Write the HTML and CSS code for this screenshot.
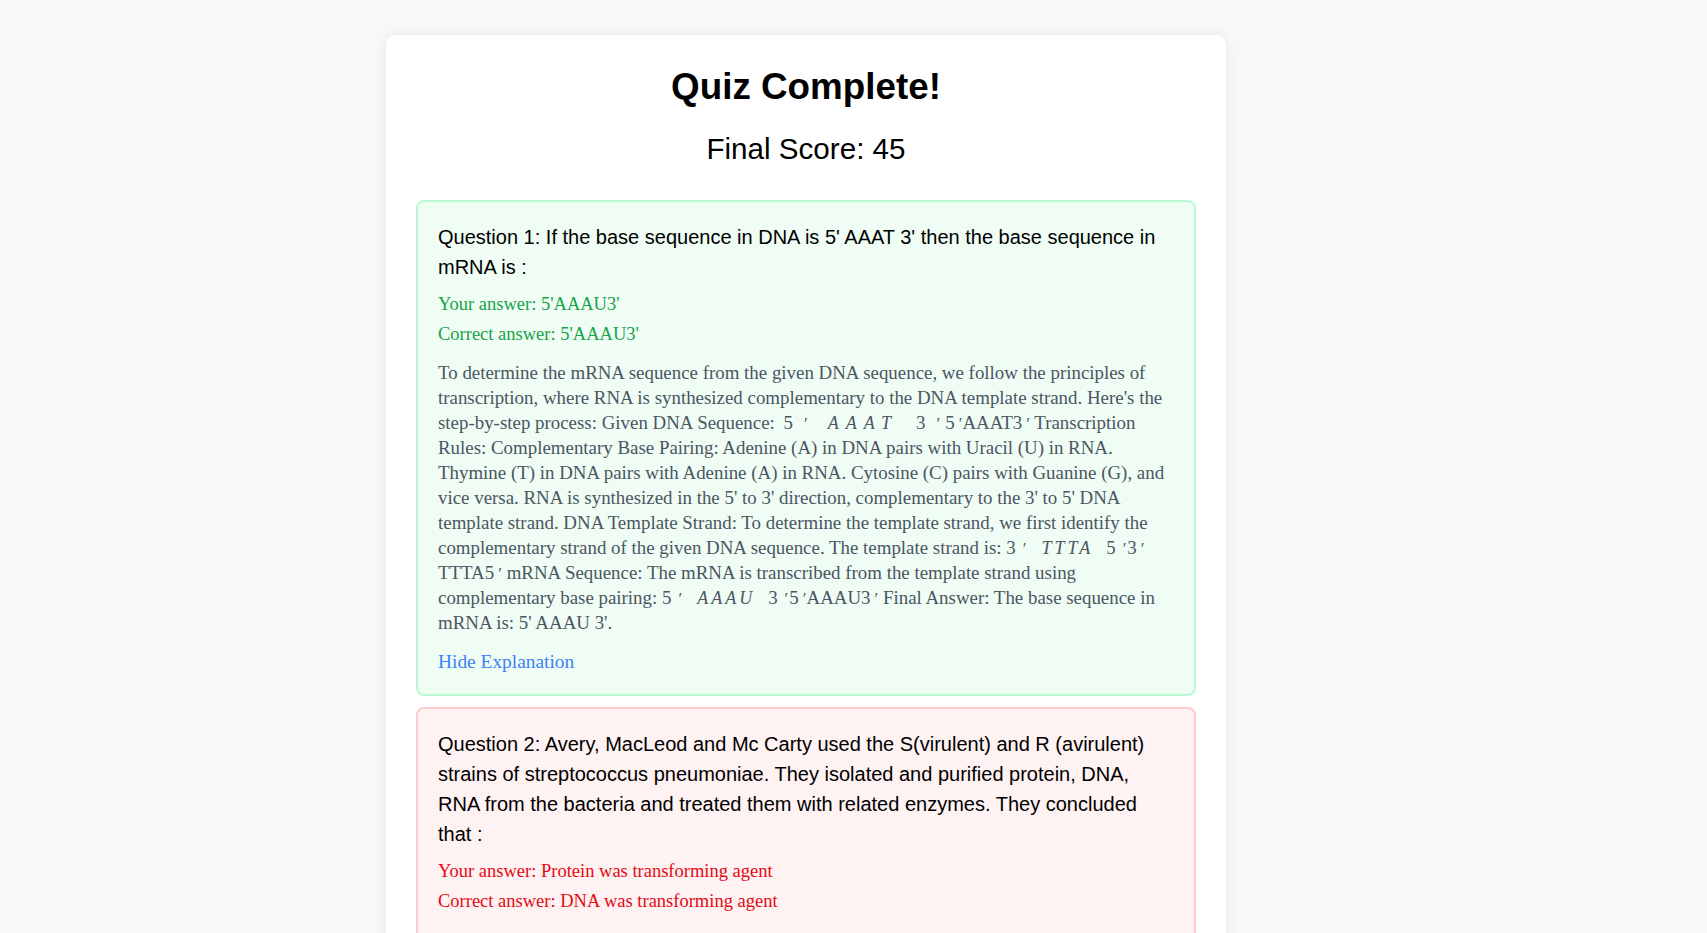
FILE: index.html
```html
<!DOCTYPE html>
<html lang="en">
<head>
<meta charset="utf-8">
<title>Quiz Complete</title>
<link rel="stylesheet" href="styles.css">
</head>
<body>
<div class="page">
  <main class="card">
    <h1 class="title">Quiz Complete!</h1>
    <h2 class="score">Final Score: 45</h2>

    <section class="result correct">
      <p class="question">Question 1: If the base sequence in DNA is 5' AAAT 3' then the base sequence in mRNA is :</p>
      <p class="answer">Your answer: 5'AAAU3'</p>
      <p class="answer">Correct answer: 5'AAAU3'</p>
      <p class="explanation">To determine the mRNA sequence from the given DNA sequence, we follow the principles of transcription, where RNA is synthesized complementary to the DNA template strand. Here's the step-by-step process: Given DNA Sequence: <span class="math math-wide">5<span class="pr">′</span><i class="var">AAAT</i>3<span class="pr">′</span></span>5<span class="pr2">′</span>AAAT3<span class="pr2">′</span> Transcription Rules: Complementary Base Pairing: Adenine (A) in DNA pairs with Uracil (U) in RNA. Thymine (T) in DNA pairs with Adenine (A) in RNA. Cytosine (C) pairs with Guanine (G), and vice versa. RNA is synthesized in the 5' to 3' direction, complementary to the 3' to 5' DNA template strand. DNA Template Strand: To determine the template strand, we first identify the complementary strand of the given DNA sequence. The template strand is: <span class="math">3<span class="pr">′</span><i class="var">TTTA</i>5<span class="pr">′</span></span>3<span class="pr2">′</span> TTTA5<span class="pr2">′</span> mRNA Sequence: The mRNA is transcribed from the template strand using complementary base pairing: <span class="math">5<span class="pr">′</span><i class="var">AAAU</i>3<span class="pr">′</span></span>5<span class="pr2">′</span>AAAU3<span class="pr2">′</span> Final Answer: The base sequence in mRNA is: 5' AAAU 3'.</p>
      <a class="toggle" href="#">Hide Explanation</a>
    </section>

    <section class="result wrong">
      <p class="question">Question 2: Avery, MacLeod and Mc Carty used the S(virulent) and R (avirulent) strains of streptococcus pneumoniae. They isolated and purified protein, DNA, RNA from the bacteria and treated them with related enzymes. They concluded that :</p>
      <p class="answer">Your answer: Protein was transforming agent</p>
      <p class="answer">Correct answer: DNA was transforming agent</p>
    </section>
  </main>
</div>
</body>
</html>
```

FILE: styles.css
```css
* {
  box-sizing: border-box;
}

html, body {
  margin: 0;
  padding: 0;
  background: #f7f8fa;
}

.page {
  display: flex;
  justify-content: center;
  padding: 35px 95px 0 0;
  min-height: 933px;
}

.card {
  width: 840px;
  background: #ffffff;
  border-radius: 10px;
  box-shadow: 0 0 14px rgba(0, 0, 0, 0.07);
  padding: 30px 30px 30px;
  align-self: flex-start;
}

.title {
  margin: 0;
  font-family: "Liberation Sans", Arial, sans-serif;
  font-size: 36.8px;
  line-height: 44px;
  font-weight: 700;
  text-align: center;
  color: #000;
}

.score {
  margin: 22px 0 0;
  font-family: "Liberation Sans", Arial, sans-serif;
  font-size: 29.6px;
  line-height: 36px;
  font-weight: 400;
  text-align: center;
  color: #000;
}

.result {
  margin-top: 33px;
  border: 2px solid #bbf7d0;
  background: #f0fdf4;
  border-radius: 8px;
  padding: 20px;
}

.result + .result {
  margin-top: 11px;
}

.result.wrong {
  border-color: #fecaca;
  background: #fef2f2;
}

.question {
  margin: 0 0 10px;
  font-family: "Liberation Sans", Arial, sans-serif;
  font-size: 20px;
  line-height: 30px;
  color: #000;
}

.answer {
  margin: 0 0 6px;
  font-family: "Liberation Serif", "Times New Roman", serif;
  font-size: 18.5px;
  line-height: 24px;
}

.correct .answer {
  color: #16a34a;
}

.wrong .answer {
  color: #e50914;
}

.explanation {
  margin: 14px 0 15px;
  font-family: "Liberation Serif", "Times New Roman", serif;
  font-size: 18.9px;
  line-height: 25px;
  color: #4b5563;
}

.math {
  margin: 0 1px 0 0;
  line-height: 1;
}

.pr,
.pr2,
.var {
  line-height: 1;
}

.pr {
  margin: 0 0 0 7px;
  font-size: 17px;
}

.pr2 {
  margin: 0 0 0 4px;
  font-size: 17px;
}

.var {
  margin: 0 13px 0 15px;
  letter-spacing: 3px;
  font-size: 18px;
}

.math-wide {
  padding: 0 4px;
}

.math-wide .pr {
  margin-left: 11px;
}

.math-wide .var {
  margin: 0 18px 0 20px;
  letter-spacing: 7px;
}

.toggle {
  display: block;
  font-family: "Liberation Serif", "Times New Roman", serif;
  font-size: 19.4px;
  line-height: 24px;
  color: #3b82f6;
  text-decoration: none;
}
```
